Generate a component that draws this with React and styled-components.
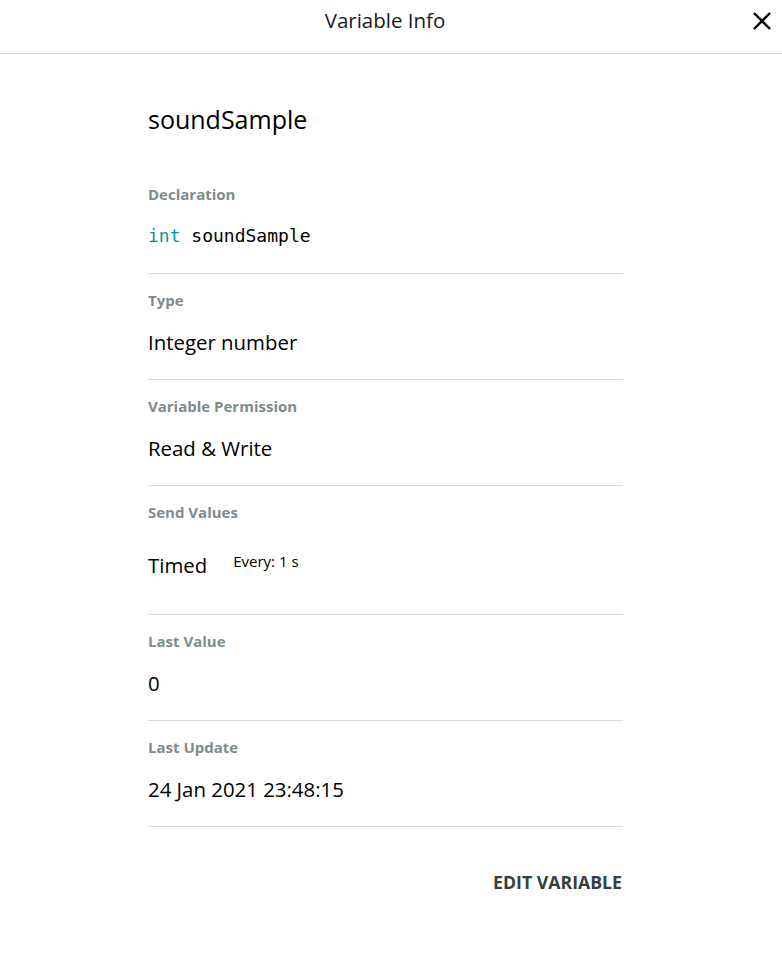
import React from "react";
import styled, { createGlobalStyle } from "styled-components";

const Global = createGlobalStyle`
  html, body { margin: 0; padding: 0; background: #fff; }
  body { font-family: "Open Sans", "Noto Sans", sans-serif; color: #000; }
`;

const Header = styled.header`
  position: relative;
  height: 54px;
  border-bottom: 1px solid #dadada;
  display: flex;
  align-items: center;
  justify-content: center;
  padding-bottom: 13px;
  box-sizing: border-box;
`;

const HeaderTitle = styled.h1`
  margin: 0;
  font-size: 20.5px;
  font-weight: 400;
  line-height: 28px;
  color: #1a1a1a;
  transform: translateX(-6px);
`;

const Close = styled.button`
  position: absolute;
  right: 8px;
  top: 9px;
  width: 24px;
  height: 24px;
  border: 0;
  padding: 0;
  background: none;
  display: flex;
  align-items: center;
  justify-content: center;
  cursor: pointer;
`;

const Body = styled.main`
  width: 475px;
  margin-left: 148px;
  padding-top: 49px;
`;

const VarName = styled.h2`
  margin: 0 0 33px;
  font-size: 25px;
  font-weight: 400;
  line-height: 32px;
`;

const Section = styled.section`
  padding: 16px 0 ${(p) => (p.$tall ? 35 : 23)}px;
  border-bottom: 1px solid #dadada;
`;

const Label = styled.div`
  font-size: 15px;
  font-weight: 700;
  line-height: 20px;
  color: #7f8c8d;
`;

const Value = styled.div`
  margin-top: ${(p) => (p.$tall ? 29 : 18)}px;
  font-size: 20.4px;
  line-height: 28px;
  display: flex;
  align-items: flex-start;
  gap: 26px;
`;

const Code = styled.code`
  font-family: "DejaVu Sans Mono", "Liberation Mono", monospace;
  font-size: 18px;
  line-height: 28px;
`;

const Keyword = styled.span`
  color: #00979c;
`;

const Small = styled.span`
  font-size: 15px;
  line-height: 20px;
`;

const Footer = styled.div`
  width: 475px;
  margin-left: 148px;
  display: flex;
  justify-content: flex-end;
  padding-top: 43px;
`;

const EditButton = styled.button`
  border: 0;
  background: none;
  padding: 0;
  margin-right: 1px;
  font-family: "Open Sans", sans-serif;
  font-size: 17.7px;
  font-weight: 700;
  line-height: 24px;
  color: #373d40;
  cursor: pointer;
`;

const rows = [
  { label: "Type", value: "Integer number" },
  { label: "Variable Permission", value: "Read & Write" },
];

export default function App() {
  return (
    <>
      <Global />
      <Header>
        <HeaderTitle>Variable Info</HeaderTitle>
        <Close aria-label="close">
          <svg width="20" height="20" viewBox="0 0 20 20">
            <path d="M2 2 L18 18 M18 2 L2 18" stroke="#000" strokeWidth="2.4" fill="none" />
          </svg>
        </Close>
      </Header>
      <Body>
        <VarName>soundSample</VarName>
        <Section>
          <Label>Declaration</Label>
          <Value>
            <Code>
              <Keyword>int</Keyword> soundSample
            </Code>
          </Value>
        </Section>
        {rows.map((r) => (
          <Section key={r.label}>
            <Label>{r.label}</Label>
            <Value>{r.value}</Value>
          </Section>
        ))}
        <Section $tall>
          <Label>Send Values</Label>
          <Value $tall>
            <span>Timed</span>
            <Small>Every: 1 s</Small>
          </Value>
        </Section>
        <Section>
          <Label>Last Value</Label>
          <Value>0</Value>
        </Section>
        <Section>
          <Label>Last Update</Label>
          <Value>24 Jan 2021 23:48:15</Value>
        </Section>
      </Body>
      <Footer>
        <EditButton>EDIT VARIABLE</EditButton>
      </Footer>
    </>
  );
}
